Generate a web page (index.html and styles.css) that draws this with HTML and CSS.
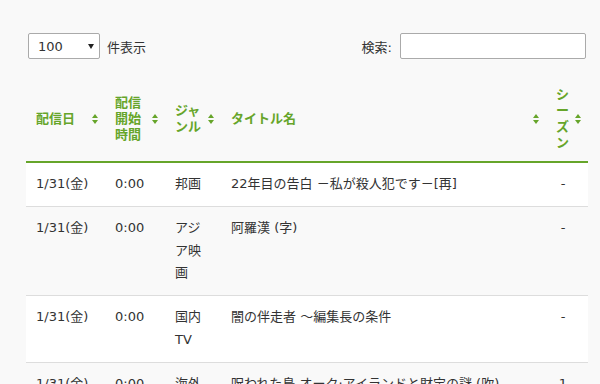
FILE: index.html
```html
<!DOCTYPE html>
<html lang="ja">
<head>
<meta charset="utf-8">
<title>配信スケジュール</title>
<link rel="stylesheet" href="styles.css">
</head>
<body>
<div class="wrap">
  <div class="controls">
    <label class="length">
      <span class="select"><select><option>100</option></select></span>
      <span>件表示</span>
    </label>
    <label class="search">
      <span>検索:</span>
      <input type="search">
    </label>
  </div>
  <table class="list">
    <colgroup>
      <col class="c-date"><col class="c-time"><col class="c-genre"><col class="c-title"><col class="c-season">
    </colgroup>
    <thead>
      <tr>
        <th>配信日</th>
        <th>配信開始時間</th>
        <th>ジャンル</th>
        <th>タイトル名</th>
        <th>シーズン</th>
      </tr>
    </thead>
    <tbody>
      <tr>
        <td>1/31(金)</td><td>0:00</td><td>邦画</td><td>22年目の告白 －私が殺人犯です－[再]</td><td class="season">-</td>
      </tr>
      <tr>
        <td>1/31(金)</td><td>0:00</td><td>アジア映画</td><td>阿羅漢 (字)</td><td class="season">-</td>
      </tr>
      <tr>
        <td>1/31(金)</td><td>0:00</td><td>国内TV</td><td>闇の伴走者 ～編集長の条件</td><td class="season">-</td>
      </tr>
      <tr>
        <td>1/31(金)</td><td>0:00</td><td>海外TV</td><td>呪われた島 オーク·アイランドと財宝の謎 (吹)</td><td class="season">1</td>
      </tr>
    </tbody>
  </table>
</div>
</body>
</html>
```

FILE: styles.css
```css
html, body {
  margin: 0;
  background: #f9f9f9;
}
body {
  font-family: "DejaVu Sans", "Noto Sans CJK JP", sans-serif;
  font-size: 13px;
  color: #333;
}
.wrap {
  padding: 33px 12px 0 26px;
}
.controls {
  display: flex;
  justify-content: space-between;
  align-items: center;
  height: 26px;
  margin-bottom: 18px;
}
.length {
  display: flex;
  align-items: center;
  gap: 7px;
  margin-left: 2px;
}
.select {
  position: relative;
  display: block;
  width: 72px;
  height: 26px;
  box-sizing: border-box;
  border: 1px solid #aaa;
  border-radius: 2px;
  background: #fff;
}
.select select {
  appearance: none;
  -webkit-appearance: none;
  display: block;
  width: 100%;
  height: 100%;
  border: 0;
  background: transparent;
  padding: 0 0 0 9px;
  font: inherit;
  color: #333;
  outline: none;
}
.select::after {
  content: "";
  position: absolute;
  right: 5px;
  top: 10px;
  border-left: 3px solid transparent;
  border-right: 3px solid transparent;
  border-top: 5px solid #222;
  pointer-events: none;
}
.search {
  display: flex;
  align-items: center;
  gap: 8px;
  margin-right: 2px;
}
.search input {
  width: 186px;
  height: 26px;
  box-sizing: border-box;
  border: 1px solid #aaa;
  border-radius: 2px;
  background: #fff;
  padding: 0 5px;
  font: inherit;
  outline: none;
}
.list {
  width: 562px;
  table-layout: fixed;
  border-collapse: separate;
  border-spacing: 0;
}
.c-date { width: 79px; }
.c-time { width: 60px; }
.c-genre { width: 56px; }
.c-title { width: 325px; }
.c-season { width: 42px; }
.list th {
  position: relative;
  padding: 10px 18px 10px 10px;
  text-align: left;
  vertical-align: middle;
  font-weight: bold;
  color: #66a52a;
  line-height: 16px;
  border-bottom: 2px solid #66a52a;
}
.list th::before,
.list th::after {
  content: "";
  position: absolute;
  right: 7px;
  top: 50%;
  border-left: 3.5px solid transparent;
  border-right: 3.5px solid transparent;
}
.list th::before {
  margin-top: -5px;
  border-bottom: 4px solid #66a52a;
}
.list th::after {
  margin-top: 1px;
  border-top: 4px solid #66a52a;
}
.list td {
  padding: 10px 10px;
  vertical-align: top;
  line-height: 22.75px;
  border-top: 1px solid #ddd;
}
.list tbody tr:first-child td {
  border-top: 0;
}
.list tbody tr:nth-child(odd) {
  background: #fff;
}
.list tbody tr:nth-child(even) {
  background: #f9f9f9;
}
.list td.season {
  text-align: center;
  padding-right: 18px;
}
```
